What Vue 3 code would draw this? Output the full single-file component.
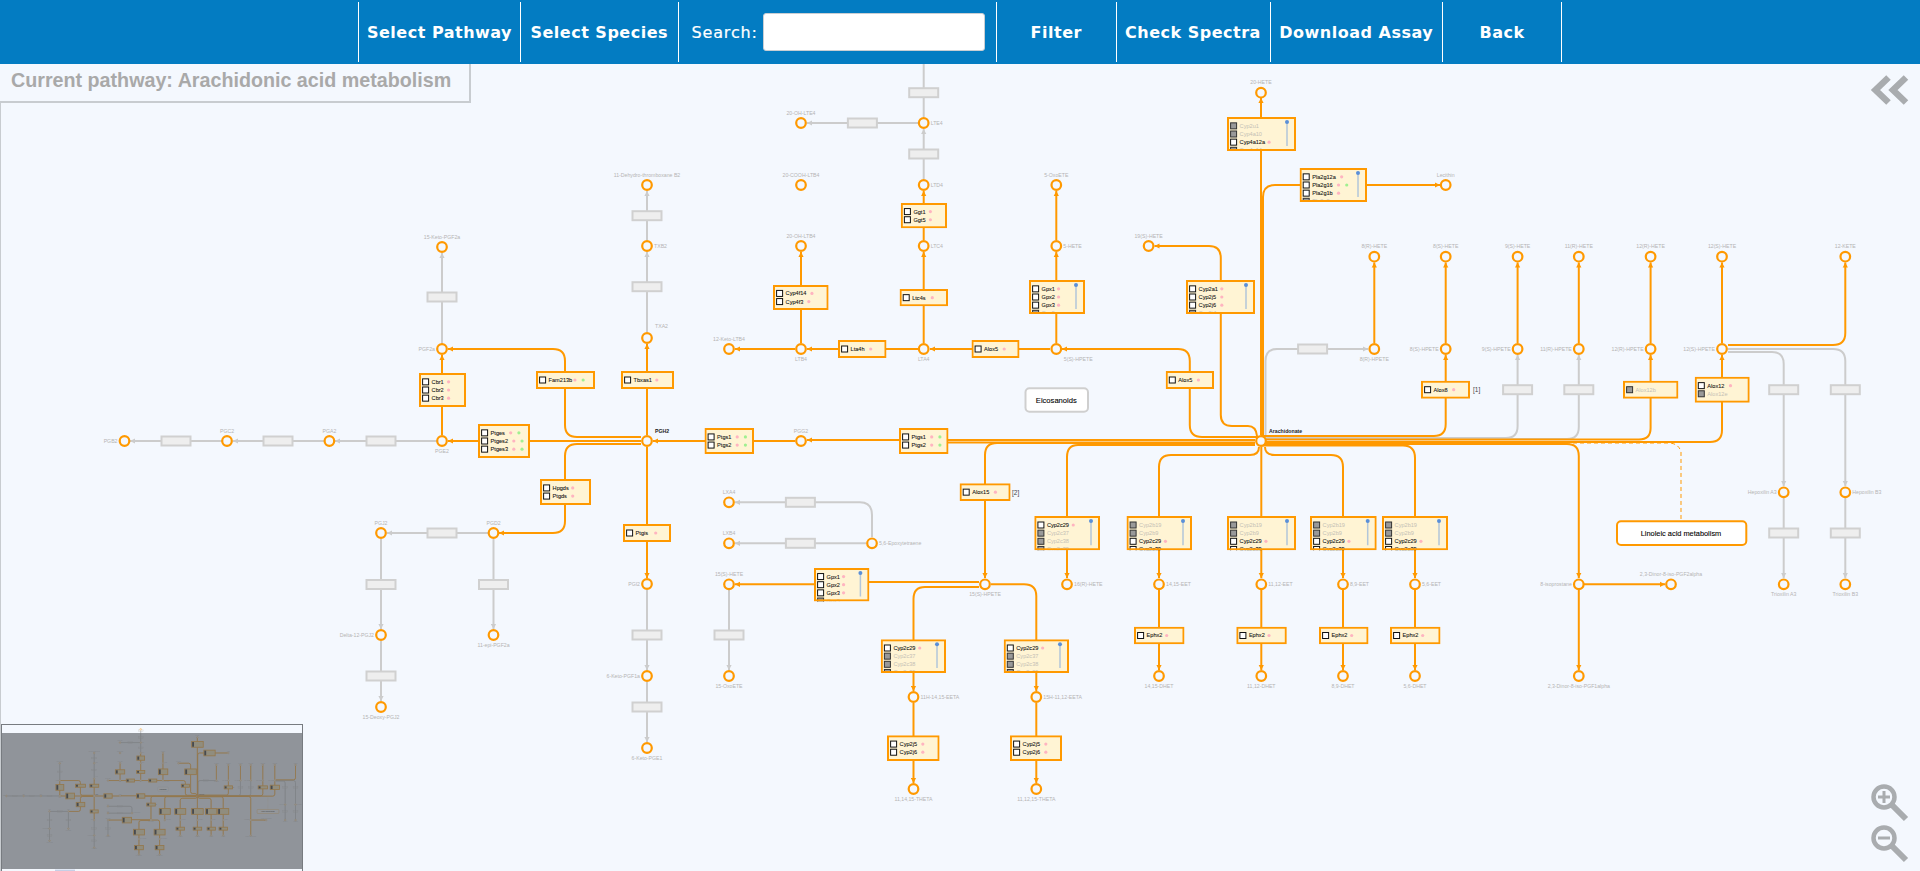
<script setup>
const nodes = [
  [124.5,441,'PGB2','l'],[227,441,'PGC2','a'],[329.4,441,'PGA2','a'],[442,441,'PGE2','b'],[442,349,'PGF2a','l'],[442,247,'15-Keto-PGF2a','a'],
  [493.5,533,'PGD2','a'],[381,533,'PGJ2','a'],[381,635,'Delta-12-PGJ2','l'],[381,707,'15-Deoxy-PGJ2','b'],[493.5,635,'11-epi-PGF2a','b'],
  [647,441,'PGH2','t'],[647,338,'TXA2','u'],[647,246,'TXB2','r'],[647,185,'11-Dehydro-thromboxane B2','a'],
  [647,584,'PGI2','l'],[647,676,'6-Keto-PGF1a','l'],[647,748,'6-Keto-PGE1','b'],
  [801,441,'PGG2','a'],[801,349,'LTB4','b'],[729,349,'12-Keto-LTB4','a'],[801,246,'20-OH-LTB4','a'],[801,185,'20-COOH-LTB4','a'],
  [923.7,349,'LTA4','b'],[923.7,246,'LTC4','r'],[923.7,185,'LTD4','r'],[923.7,123,'LTE4','r'],[801,123,'20-OH-LTE4','a'],[923.7,44,'','a'],
  [1056.3,349,'5(S)-HPETE','s'],[1056.3,246,'5-HETE','r'],[1056.3,185,'5-OxoETE','a'],[1148.6,246,'19(S)-HETE','a'],[1261,92.7,'20-HETE','a'],[1445.7,185,'Lecithin','a'],
  [1261,441,'Arachidonate','t'],
  [1374.3,349,'8(R)-HPETE','b'],[1445.7,349,'8(S)-HPETE','l'],[1517.6,349,'9(S)-HPETE','l'],[1578.8,349,'11(R)-HPETE','l'],[1650.6,349,'12(R)-HPETE','l'],[1722,349,'12(S)-HPETE','l'],
  [1374.3,256.7,'8(R)-HETE','a'],[1445.7,256.7,'8(S)-HETE','a'],[1517.6,256.7,'9(S)-HETE','a'],[1578.8,256.7,'11(R)-HETE','a'],[1650.6,256.7,'12(R)-HETE','a'],[1722,256.7,'12(S)-HETE','a'],[1845.3,256.7,'12-KETE','a'],
  [1783.7,492.3,'Hepoxilin A3','l'],[1845.3,492.3,'Hepoxilin B3','r'],[1783.7,584.3,'Trioxilin A3','b'],[1845.3,584.3,'Trioxilin B3','b'],
  [1578.8,584.3,'8-isoprostane','l'],[1671,584.3,'2,3-Dinor-8-iso-PGF2alpha','a'],[1578.8,676,'2,3-Dinor-8-iso-PGF1alpha','b'],
  [729,502.3,'LXA4','a'],[729,543.3,'LXB4','a'],[872,543.3,'5,6-Epoxytetraene','r'],
  [729,584.3,'15(S)-HETE','a'],[729,676,'15-OxoETE','b'],[985,584.3,'15(S)-HPETE','b'],[1067,584.3,'16(R)-HETE','r'],
  [1159,584.3,'14,15-EET','r'],[1261.3,584.3,'11,12-EET','r'],[1343,584.3,'8,9-EET','r'],[1415,584.3,'5,6-EET','r'],
  [1159,676,'14,15-DHET','b'],[1261.3,676,'11,12-DHET','b'],[1343,676,'8,9-DHET','b'],[1415,676,'5,6-DHET','b'],
  [913.5,697,'11H-14,15-EETA','r'],[1036.3,697,'15H-11,12-EETA','r'],[913.5,789,'11,14,15-THETA','b'],[1036.3,789,'11,12,15-THETA','b']
].map(([x, y, label, p]) => {
  const place = {
    a: [x, y - 8.3, 'middle'], b: [x, y + 11.5, 'middle'], l: [x - 7, y + 1.5, 'end'], r: [x + 7, y + 1.5, 'start'],
    t: [x + 8, y - 8.2, 'start'], u: [x + 8, y - 10, 'start'], s: [x + 7.5, y + 11.5, 'start']
  }[p]
  return { x, y, label, tx: place[0], ty: place[1], anchor: place[2], bold: p === 't' }
})

const reactions = [
  [381,441],[278,441],[176,441],[442,297],[442,533],[381,584.5],[381,676],[493.5,584.5],
  [647,215.7],[647,286.7],[647,635],[647,707],[862.4,123],[923.7,92.7],[923.7,154],[923.7,52],
  [800.4,502.3],[800.4,543.3],[729,635],[1312.6,349],[1517.6,389.7],[1578.8,389.7],[1783.7,389.7],[1845.3,389.7],[1783.7,533],[1845.3,533]
]

const orangeArrows = [
  'M795,441H653','M641,441H448','M442,435V355','M647,435V344','M647,447V578',
  'M641,437H577Q565,437 565,425V361Q565,349 553,349H448','M641,444H577Q565,444 565,456V521Q565,533 553,533H499',
  'M918,349H807','M795,349H735','M801,343V252','M923.7,343V252','M923.7,240V191','M1050,349H930','M1056.3,343V252','M1056.3,240V191',
  'M1255,440H807','M1261,435V98',
  'M1263,436V197Q1263,185 1275,185H1440',
  'M1220.8,314V258Q1220.8,246 1209,246H1154.5',
  'M1261,437H1202Q1189.8,437 1189.8,425V361Q1189.8,349 1178,349H1062',
  'M1374.3,343V262.5','M1445.7,343V262.5','M1517.6,343V262.5','M1578.8,343V262.5','M1650.6,343V262.5','M1722,343V262.5',
  'M1261,436H1434Q1445.7,436 1445.7,424V355','M1261,439.5H1639Q1650.6,439.5 1650.6,428V355','M1261,442H1710Q1722,442 1722,430V355',
  'M1728,345H1833Q1845.3,345 1845.3,333V262.5',
  'M1261,444H1567Q1578.8,444 1578.8,456V578','M1584,584.3H1665','M1578.8,590V670',
  'M1255,443H997Q985,443 985,455V578','M979,582H869M814,584.3H735','M1067,550V578','M1159,550V578','M1261.3,550V578','M1343,550V578','M1415,550V578',
  'M1159,590V670','M1261.3,590V670','M1343,590V670','M1415,590V670',
  'M913.5,673V691','M913.5,703V783','M1036.3,673V691','M1036.3,703V783'
]
const orangePlain = [
  'M1255,445H1078Q1067,445 1067,457V516','M1259,447Q1259,455 1250,455H1171Q1159,455 1159,467V516','M1261.3,447V516',
  'M1265,447Q1265,455 1275,455H1331Q1343,455 1343,467V516','M1261,445.5H1403Q1415,445.5 1415,458V516',
  'M1220.8,300V415Q1220.8,426 1232,426H1248Q1256,426 1257,436','M1255,442.5H948',
  'M979,587H925Q913.5,587 913.5,599V640','M991,584.3H1024Q1036.3,584.3 1036.3,596V640'
]
const grayArrows = [
  'M437,441H335','M324,441H233','M222,441H130','M442,344V253','M488,533H387','M381,539V629','M381,641V701','M493.5,539V629',
  'M647,332V252','M647,240V191','M647,590V670','M647,682V742','M918,123H807','M923.7,179V129','M923.7,117V52',
  'M866,543.3H735','M872,537V515Q872,502.3 860,502.3H735','M729,590V670',
  'M1265.5,441V361Q1265.5,349 1277,349H1368',
  'M1261,438H1506Q1517.6,438 1517.6,426V355','M1261,439H1567Q1578.8,439 1578.8,427V355',
  'M1728,349H1833Q1845.3,349 1845.3,361V486','M1728,352H1772Q1783.7,352 1783.7,364V486','M1783.7,498V578','M1845.3,498V578'
]
const miniOrange = [...orangeArrows, ...orangePlain]

const parseRow = (raw) => {
  const [name, dots = ''] = raw.split(':')
  const off = name.startsWith('-')
  const text = off ? name.slice(1) : name
  return { text, off, pink: dots.includes('p'), green: dots.includes('g') }
}
const cyp = ['-Cyp2b19','-Cyp2b9','Cyp2c29:p','Cyp2c39']
const cypL = ['Cyp2c29:p','-Cyp2c37','-Cyp2c38','-Cyp2c39']
const boxes = [
  [419,373,47,34,['Cbr1:p','Cbr2:p','Cbr3:p']],
  [478,424,52,34,['Ptges:pg','Ptges2:pg','Ptges3:pg']],
  [536,371,59,18,['Fam213b:pg']],
  [540,479,51,26,['Hpgds:p','Ptgds:p']],
  [621,371,53,18,['Tbxas1:p']],
  [623,524,48,18,['Ptgis:p']],
  [704.5,428,49.5,26,['Ptgs1:pg','Ptgs2:pg']],
  [899,428,49.5,26,['Ptgs1:pg','Ptgs2:pg']],
  [838,340,48.5,18,['Lta4h:p']],
  [971.5,340,48,18,['Alox5:p']],
  [1165.7,371,48.3,18,['Alox5:p']],
  [773,285,55.6,25,['Cyp4f14:p','Cyp4f3:p']],
  [899.6,289,48.4,17.3,['Ltc4s:p']],
  [900.8,203,46.2,25.3,['Ggt1:p','Ggt5:p']],
  [1029,280,56,34,['Gpx1:p','Gpx2:p','Gpx3:p','-Gpx5'],true],
  [1186,280,69,34,['Cyp2a1:p','Cyp2j5:p','Cyp2j6:p','-Cyp2t4'],true],
  [1227,117,69,34,['-Cyp2u1','-Cyp4a10','Cyp4a12a:p','-Cyp4a14'],true],
  [1299.6,168,67.4,34,['Pla2g12a:p','Pla2g16:pg','Pla2g1b:p','-Pla2g2a'],true],
  [959.6,483.3,51,17.7,['Alox15:p']],
  [1034.3,516,65.7,34.3,cypL,true],
  [1126.5,516,65.5,34.3,cyp,true],
  [1227,516,69,34.3,cyp,true],
  [1310,516,66.7,34.3,cyp,true],
  [1382,516,66,34.3,cyp,true],
  [814,568,55.4,33.4,['Gpx1:p','Gpx2:p','Gpx3:p','-Gpx5'],true],
  [880.8,639.3,65.2,33.7,cypL,true],
  [1003.7,639.3,65.3,33.7,cypL,true],
  [887,735.3,52.6,25.7,['Cyp2j5:p','Cyp2j6:p']],
  [1010,735.3,52,25.7,['Cyp2j5:p','Cyp2j6:p']],
  [1134,626.7,50.5,17.6,['Ephx2:p']],
  [1236.3,626.7,50.5,17.6,['Ephx2:p']],
  [1319,626.7,49.5,17.6,['Ephx2:p']],
  [1390,626.7,50.5,17.6,['Ephx2:p']],
  [1421,380.7,49,18,['Alox8:p']],
  [1623,380.7,55.4,18,['-Alox12b']],
  [1694.7,376.7,55,26,['Alox12:p','-Alox12e']]
].map(([x, y, w, h, rows, scroll]) => {
  const shown = scroll ? 3 : rows.length
  const first = h / 2 - ((shown - 1) * 8.15) / 2
  return {
    x, y, w, h, scroll,
    rows: rows.map((raw, i) => {
      const r = parseRow(raw)
      const rowY = first + i * 8.15
      const dot = 12.6 + r.text.length * 3.12 + 4.5
      return { ...r, y: rowY, dotP: dot, dotG: dot + 8.2 }
    })
  }
})

const navLeft = ['Select Pathway', 'Select Species']
const navRight = [
  { label: 'Filter', cls: 'w-filter' },
  { label: 'Check Spectra', cls: 'w-check' },
  { label: 'Download Assay', cls: 'w-download' },
  { label: 'Back', cls: 'w-back' }
]
</script>

<template>
  <div class="page">
    <header class="bar">
      <nav class="nav">
        <div v-for="(item, i) in navLeft" :key="item" class="cell" :class="i === 0 ? 'w-path' : 'w-species'">{{ item }}</div>
        <div class="cell search">
          <label for="q" class="search-label">Search:</label>
          <input id="q" class="search-input" type="text" />
        </div>
        <div v-for="item in navRight" :key="item.label" class="cell" :class="item.cls">{{ item.label }}</div>
      </nav>
    </header>

    <main class="canvas">
      <svg class="graph" viewBox="0 64 1920 807" width="1920" height="807">
        <defs>
          <marker id="ao" markerUnits="userSpaceOnUse" markerWidth="6" markerHeight="6" refX="5" refY="3" orient="auto">
            <path class="tip-o" d="M0,0.4L5,3L0,5.6z" />
          </marker>
          <marker id="ag" markerUnits="userSpaceOnUse" markerWidth="6" markerHeight="6" refX="5" refY="3" orient="auto">
            <path class="tip-g" d="M0,0.4L5,3L0,5.6z" />
          </marker>
          <g id="diagram">
            <path v-for="d in grayArrows" :key="d" class="edge gray" :d="d" marker-end="url(#ag)" />
            <path class="dash" d="M1265,443H1670Q1679,444 1681,452V520" />
            <path v-for="d in orangePlain" :key="d" class="edge orange" :d="d" />
            <path v-for="d in orangeArrows" :key="d" class="edge orange" :d="d" marker-end="url(#ao)" />
            <rect v-for="r in reactions" :key="r.join()" class="reaction" :x="r[0] - 14.5" :y="r[1] - 4.5" width="29" height="9" />

            <circle v-for="n in nodes" :key="n.x + '-' + n.y" class="node" :cx="n.x" :cy="n.y" r="4.8" />
            <template v-for="n in nodes" :key="'t' + n.x + '-' + n.y">
              <text
                v-if="n.label"
                class="label"
                :class="{ strong: n.bold }"
                :x="n.tx"
                :y="n.ty"
                :text-anchor="n.anchor"
              >{{ n.label }}</text>
            </template>

            <svg v-for="b in boxes" :key="b.x + '-' + b.y" :x="b.x" :y="b.y" :width="b.w" :height="b.h">
              <rect class="box-fill" x="1" y="1" :width="b.w - 2" :height="b.h - 2" />
              <g v-for="r in b.rows" :key="r.text + r.y">
                <rect class="check" :class="{ off: r.off }" x="3.6" :y="r.y - 3" width="6" height="6" />
                <text class="gene" :class="{ off: r.off }" x="12.6" :y="r.y + 2">{{ r.text }}</text>
                <circle v-if="r.pink" class="dot-p" :cx="r.dotP" :cy="r.y" r="1.6" />
                <circle v-if="r.green" class="dot-g" :cx="r.dotG" :cy="r.y" r="1.6" />
              </g>
              <g v-if="b.scroll">
                <line class="track" :x1="b.w - 9" :x2="b.w - 9" y1="5" :y2="b.h - 5" />
                <circle class="thumb" :cx="b.w - 9" cy="5" r="2" />
              </g>
              <rect class="box-line" x="1" y="1" :width="b.w - 2" :height="b.h - 2" />
            </svg>

            <text class="tag" x="1012" y="494.5">[2]</text>
            <text class="tag" x="1473" y="392">[1]</text>

            <rect class="pill" x="1025.5" y="388.3" width="62.5" height="23.4" rx="4" />
            <text class="pill-text" x="1056.3" y="402.5" text-anchor="middle">Eicosanoids</text>
            <rect class="pill hot" x="1617" y="521.3" width="129.3" height="23.7" rx="4" />
            <text class="pill-text wide" x="1681" y="535.5" text-anchor="middle">Linoleic acid metabolism</text>
          </g>
        </defs>
        <use href="#diagram" />
      </svg>

      <div class="title">Current pathway: Arachidonic acid metabolism</div>

      <svg class="chevrons" viewBox="0 0 42 32" width="42" height="32" aria-hidden="true">
        <path class="chev" d="M18.5,3.5L5.5,16L18.5,28.5M36,3.5L23,16L36,28.5" />
      </svg>

      <svg class="zoom" viewBox="0 0 44 88" width="44" height="88" aria-hidden="true">
        <g class="glass">
          <circle cx="15" cy="15" r="10.5" />
          <path class="handle" d="M23,23L37,37" />
          <path class="sign" d="M9,15H21M15,9V21" />
        </g>
        <g class="glass" transform="translate(0,41)">
          <circle cx="15" cy="15" r="10.5" />
          <path class="handle" d="M23,23L37,37" />
          <path class="sign" d="M9,15H21" />
        </g>
      </svg>

      <div class="mini">
        <svg class="mini-svg" width="300" height="146" viewBox="0 0 300 146">
          <g transform="translate(-16.5,-3.1) scale(0.168)">
            <use href="#diagram" />
            <path v-for="d in grayArrows" :key="'mg' + d" class="mini-gray" :d="d" />
            <path v-for="d in miniOrange" :key="'mo' + d" class="mini-edge" :d="d" />
            <g v-for="b in boxes" :key="'m' + b.x + '-' + b.y">
              <rect class="mini-box" :x="b.x" :y="b.y" :width="b.w" :height="b.h" />
              <rect class="mini-bar" :x="b.x + 3" :y="b.y + 3" width="11" :height="b.h - 6" />
            </g>
          </g>
          <rect class="mini-legend" x="53" y="144.6" width="20" height="1.4" />
          <rect class="mini-shade" x="0" y="8" width="300" height="136" />
        </svg>
      </div>
    </main>
  </div>
</template>

<style>
html, body { margin: 0; padding: 0; overflow: hidden; }
</style>

<style scoped>
.page {
  width: 1920px;
  height: 871px;
  display: flex;
  flex-direction: column;
  overflow: hidden;
  background: #f4f8fe;
  font-family: "Liberation Sans", Arial, sans-serif;
}
.bar {
  position: relative;
  z-index: 2;
  flex: 0 0 64px;
  background: #037cc2;
  display: flex;
  align-items: center;
}
.nav {
  display: flex;
  margin-left: 358px;
  height: 60px;
  border-right: 1px solid #fff;
}
.cell {
  display: flex;
  align-items: center;
  justify-content: center;
  box-sizing: border-box;
  border-left: 1px solid #fff;
  color: #fff;
  font: bold 16px "DejaVu Sans", sans-serif;
  letter-spacing: 0.5px;
  cursor: pointer;
  white-space: nowrap;
}
.w-path { width: 162px; }
.w-species { width: 157.5px; }
.w-filter { width: 119.5px; }
.w-check { width: 154px; }
.w-download { width: 172.5px; }
.w-back { width: 119px; }
.search {
  width: 318.5px;
  justify-content: flex-start;
  padding-left: 13px;
  gap: 5.5px;
  cursor: default;
}
.search-label {
  font: 16px "DejaVu Sans", sans-serif;
  letter-spacing: 0.85px;
  -webkit-text-stroke: 0.2px #fff;
}
.search-input {
  box-sizing: border-box;
  width: 222px;
  height: 38px;
  border: 1px solid #c9ced3;
  border-radius: 3px;
  background: #fff;
  padding: 0 6px;
  outline: none;
}
.canvas {
  position: relative;
  flex: 1;
  border-left: 1px solid #c8ccd0;
}
.graph {
  position: absolute;
  left: -1px;
  top: 0;
  display: block;
}
.title {
  position: absolute;
  left: -1px;
  top: 0;
  box-sizing: border-box;
  width: 471px;
  height: 39px;
  padding-left: 11px;
  border-right: 2px solid #c8ccd0;
  border-bottom: 2px solid #c8ccd0;
  background: #f4f8fe;
  color: #a9a9a9;
  font: bold 19.7px/33px "Liberation Sans", Arial, sans-serif;
  white-space: nowrap;
}
.chevrons {
  position: absolute;
  left: 1869px;
  top: 10px;
}
.chev {
  fill: none;
  stroke: #a9acaf;
  stroke-width: 6.5;
}
.zoom {
  position: absolute;
  left: 1868px;
  top: 718px;
}
.glass circle {
  fill: none;
  stroke: #a9acaf;
  stroke-width: 4.5;
}
.handle {
  fill: none;
  stroke: #a9acaf;
  stroke-width: 6;
}
.sign {
  fill: none;
  stroke: #a9acaf;
  stroke-width: 3;
}
.mini {
  position: absolute;
  left: 0;
  top: 660px;
  width: 302px;
  height: 147px;
  border: solid #777b80;
  border-width: 1px 1px 0 1px;
  background: #fff;
  box-sizing: border-box;
  overflow: hidden;
}
.mini-svg { display: block; background: #f4f8fe; }
.mini-shade { fill: rgba(101, 105, 111, 0.7); }
.mini-legend { fill: #c6cfe6; }
.mini-box {
  fill: #f5dfa0;
  stroke: #ff9900;
  stroke-width: 5;
}
.mini-bar { fill: #000; }
.mini-edge {
  fill: none;
  stroke: #ff9900;
  stroke-width: 5;
}
.mini-gray {
  fill: none;
  stroke: #bdbdbd;
  stroke-width: 5;
}
.edge {
  fill: none;
  stroke-width: 2;
}
.orange { stroke: #ff9900; }
.gray { stroke: #cccccc; }
.tip-o { fill: #ff9900; }
.tip-g { fill: #cccccc; }
.dash {
  fill: none;
  stroke: #ff9900;
  stroke-width: 1;
  stroke-dasharray: 4 3;
}
.reaction {
  fill: #eeeeee;
  stroke: #d0d0d0;
  stroke-width: 2;
}
.node {
  fill: #f4f8fe;
  stroke: #ff9900;
  stroke-width: 2.2;
}
.label {
  font: 5.2px "Liberation Sans", Arial, sans-serif;
  fill: #b4b4b4;
}
.strong {
  font-weight: bold;
  fill: #222;
}
.box-fill { fill: #fff4d4; }
.box-line {
  fill: none;
  stroke: #ff9900;
  stroke-width: 2;
}
.check {
  fill: #fff;
  stroke: #111;
  stroke-width: 1;
}
.check.off {
  fill: #999;
  stroke: #333;
}
.gene {
  font: 5.6px "Liberation Sans", Arial, sans-serif;
  fill: #111;
  stroke: #111;
  stroke-width: 0.08;
}
.gene.off { fill: #c4c0b4; stroke: none; }
.dot-p { fill: #ffb4c0; }
.dot-g { fill: #a0f090; }
.track {
  stroke: #b2c6da;
  stroke-width: 1.5;
}
.thumb { fill: #5a8fd8; }
.tag {
  font: 6.5px "Liberation Sans", Arial, sans-serif;
  fill: #444;
}
.pill {
  fill: #fff;
  stroke: #cfcfcf;
  stroke-width: 2;
}
.pill.hot { stroke: #ff9900; }
.pill-text {
  font: 7.6px "Liberation Sans", Arial, sans-serif;
  fill: #000;
  stroke: #000;
  stroke-width: 0.1;
}
.pill-text.wide {
  font-size: 7.4px;
}
</style>
